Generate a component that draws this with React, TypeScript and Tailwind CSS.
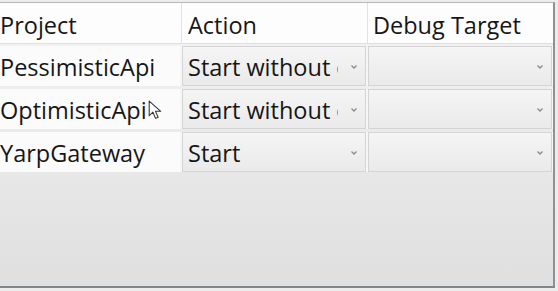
import React from "react";

const font = { fontFamily: '"Open Sans", "Noto Sans", sans-serif' };

function Chevron() {
  return (
    <svg width="8" height="6" viewBox="0 0 8 6" className="shrink-0 ml-[12px] mt-[2px]">
      <path d="M1.5 1.5 L4 4 L6.5 1.5" fill="none" stroke="#8a8a8a" strokeWidth="1.3" />
    </svg>
  );
}

function Combo({ text }: { text: string }) {
  return (
    <div className="h-[40px] flex items-center border border-[#d4d4d4] bg-gradient-to-b from-[#f5f5f5] to-[#eaeaea] pl-[5px] pr-[7px]">
      <div className="flex-1 overflow-hidden whitespace-nowrap text-[23.5px] text-[#161616] leading-none pt-[3px]">{text}</div>
      <Chevron />
    </div>
  );
}

const rows = [
  { name: "PessimisticApi", action: "Start without debugging" },
  { name: "OptimisticApi", action: "Start without debugging" },
  { name: "YarpGateway", action: "Start" },
];

export default function App() {
  return (
    <div className="w-[558px] h-[291px] bg-[#ececec] overflow-hidden relative" style={font}>
      <div className="ml-[-2px] mt-[2px] w-[557px] h-[286px] border-t border-t-[#b8b8b8] border-r-2 border-r-[#8e9296] border-b-2 border-b-[#7f8589] bg-gradient-to-b from-[#f4f4f4] to-[#dfdfdf] flex flex-col">
        <div className="grid grid-cols-[184px_186px_1fr] h-[41px] bg-[#fdfdfd] border-b border-[#e0e0e0]">
          <div className="pl-[2px] pt-[5px] flex items-center text-[23.5px] text-[#161616] border-r border-[#e2e2e2] leading-none">Project</div>
          <div className="pl-[6px] pt-[5px] flex items-center text-[23.5px] text-[#161616] border-r border-[#e2e2e2] leading-none">Action</div>
          <div className="pl-[5px] pt-[5px] flex items-center text-[23.5px] text-[#161616] leading-none">Debug Target</div>
        </div>
        <div className="flex flex-col gap-[3px] pt-[2px]">
          {rows.map((r) => (
            <div key={r.name} className="grid grid-cols-[182px_184px_1fr] gap-x-[2px] bg-[#f6f6f6]">
              <div className="pl-[2px] pt-[3px] flex items-center text-[23.5px] text-[#161616] bg-[#fbfbfb] whitespace-nowrap leading-none">{r.name}</div>
              <Combo text={r.action} />
              <div className="mr-[1px]"><Combo text="" /></div>
            </div>
          ))}
        </div>
      </div>
      <svg className="absolute left-[148px] top-[100px]" width="15" height="21" viewBox="0 0 14 20">
        <path d="M1 1 L1 15 L4.5 11.5 L7 17.5 L9.5 16.5 L7 10.8 L12 10.8 Z" fill="#ffffff" stroke="#333" strokeWidth="1" strokeLinejoin="round" />
      </svg>
    </div>
  );
}
